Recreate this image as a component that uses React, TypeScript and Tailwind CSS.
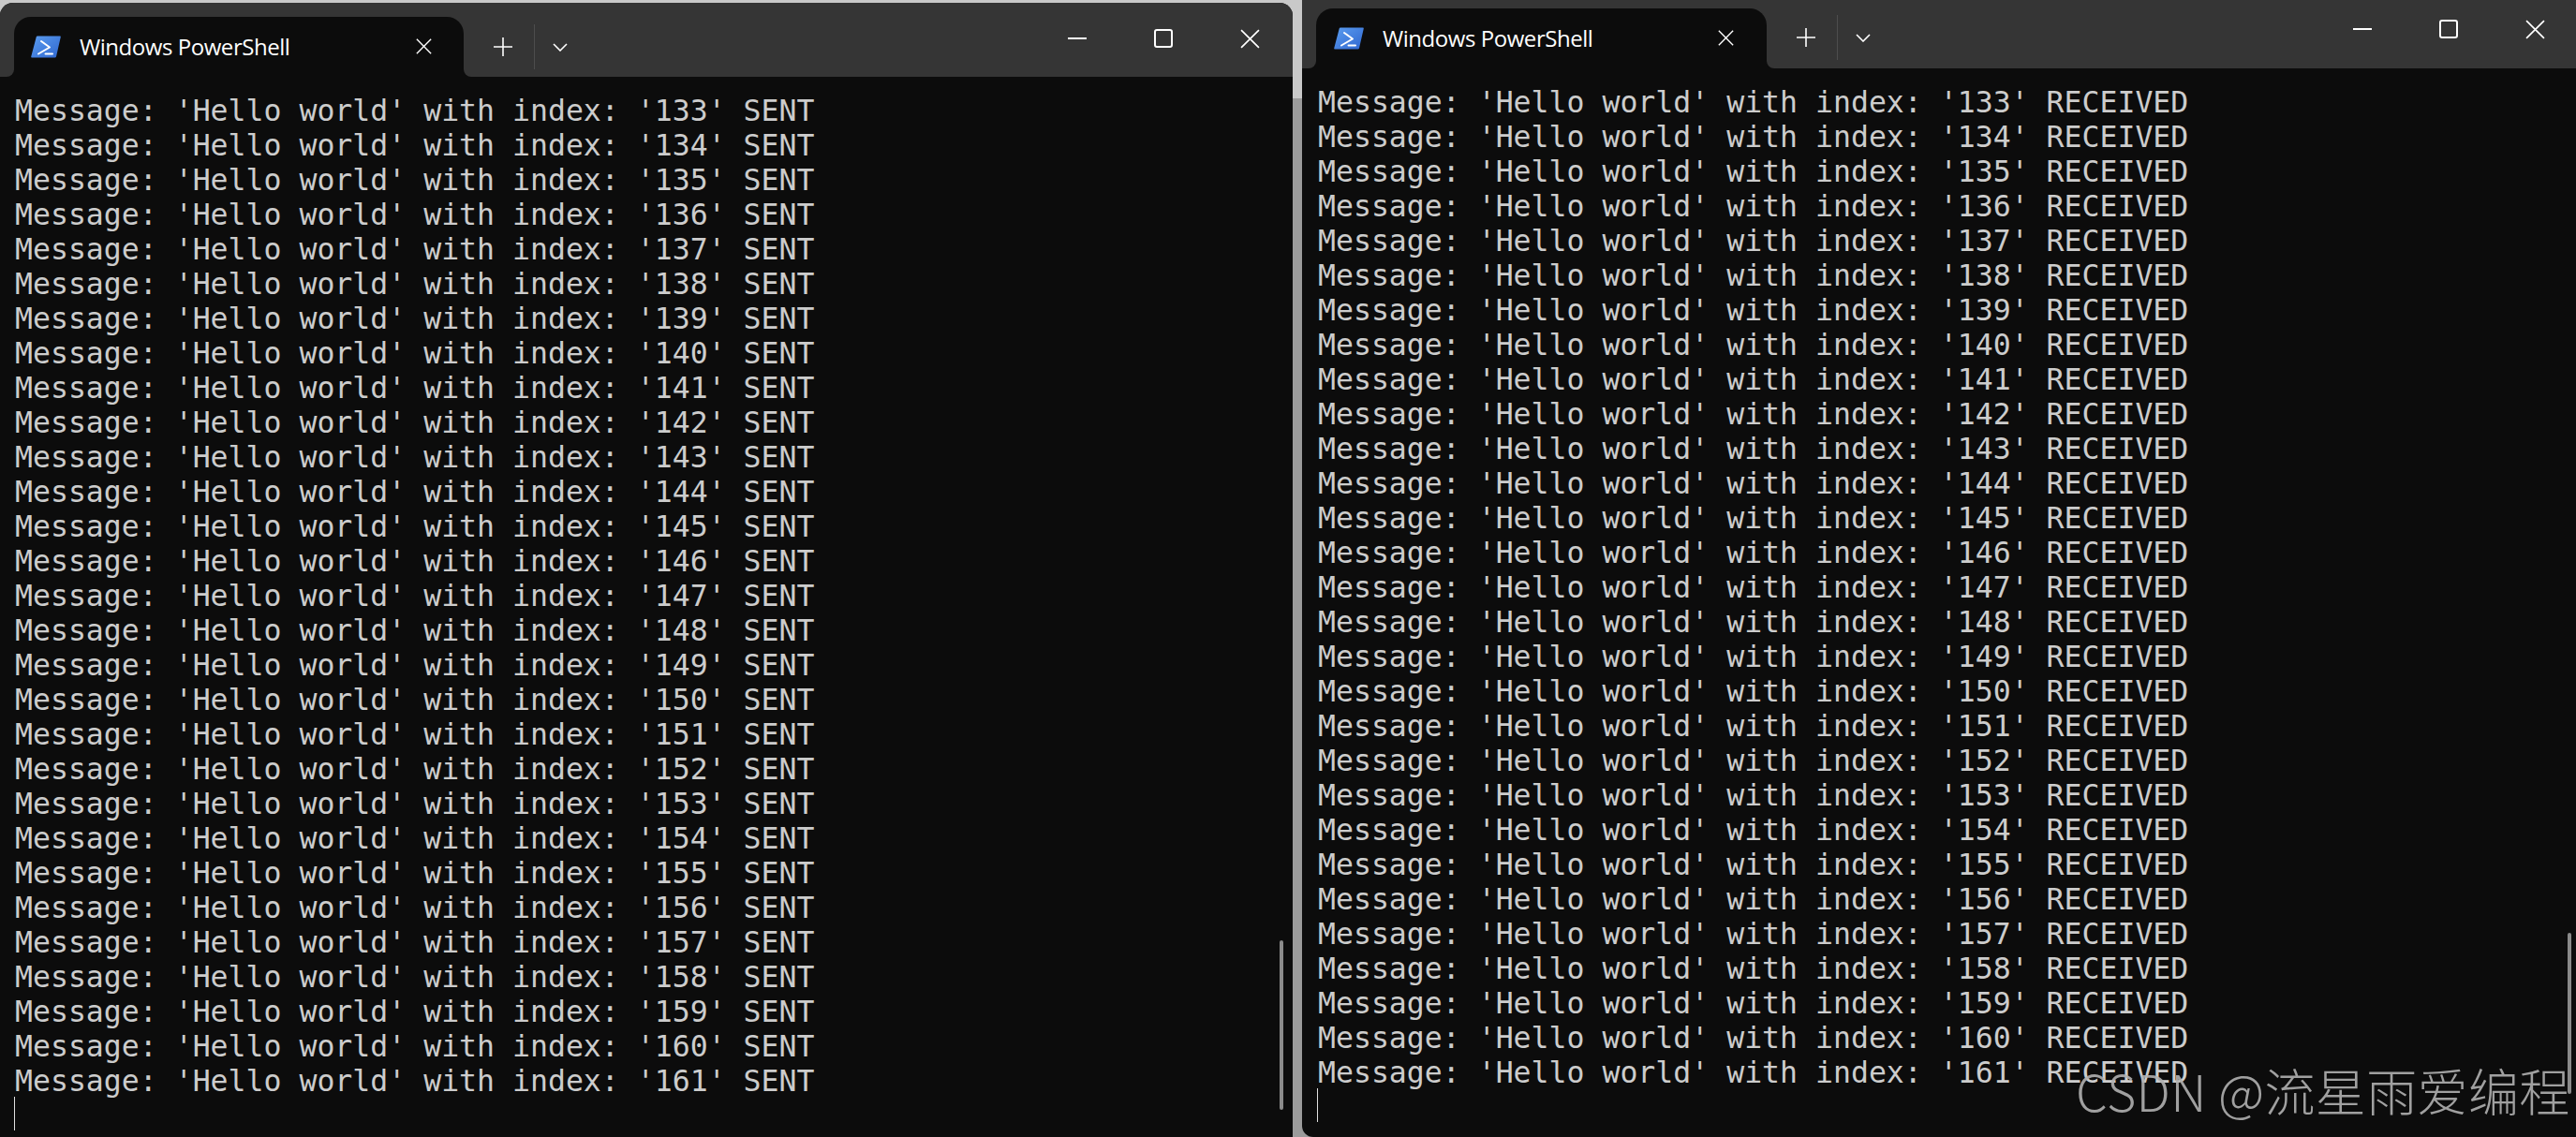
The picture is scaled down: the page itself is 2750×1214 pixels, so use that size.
import React from 'react';

const mono = 'font-["DejaVu_Sans_Mono","Liberation_Mono",monospace]';

const PsIcon = () => (
  <svg className="w-[32px] h-[24px] shrink-0" viewBox="0 0 32 24">
    <defs>
      <linearGradient id="ps" x1="0" y1="0" x2="1" y2="1">
        <stop offset="0" stopColor="#5b9df0" />
        <stop offset="1" stopColor="#2f66cf" />
      </linearGradient>
    </defs>
    <path d="M7 0.5H31q1 0 .8 1L27 22.5q-.3 1-1.3 1H1q-1 0-.8-1L5.8 1.3Q6 .5 7 .5z" fill="url(#ps)" />
    <path d="M11 6l9 6.5L8 19.5" fill="none" stroke="#fff" strokeWidth="2" strokeLinecap="round" strokeLinejoin="round" />
    <path d="M15.5 19.5h7.5" fill="none" stroke="#fff" strokeWidth="2" strokeLinecap="round" />
  </svg>
);

const XIcon = ({ size }: { size: number }) => (
  <svg width={size} height={size} viewBox="0 0 20 20" fill="none" stroke="#fff" strokeWidth="1.6">
    <path d="M1 1l18 18M19 1L1 19" />
  </svg>
);

const TitleBar = ({ offset }: { offset: boolean }) => (
  <div className={offset ? 'h-[73px] bg-[#353535] flex shrink-0 pl-[15px]' : 'h-[79px] bg-[#353535] flex shrink-0 pl-[15px]'}>
    <div className={offset ? 'relative mt-[9px] w-[481px] h-[64px] bg-[#0c0c0c] rounded-t-[18px] flex items-center pl-[19px]' : 'relative mt-[15px] w-[480px] h-[64px] bg-[#0c0c0c] rounded-t-[18px] flex items-center pl-[18px]'}>
      <PsIcon />
      <span className='ml-[20px] text-[24px] text-white font-["Open_Sans","Noto_Sans",sans-serif] tracking-[-0.45px] leading-none'>Windows PowerShell</span>
      <span className="absolute left-[429px] top-[23px]"><XIcon size={17} /></span>
      <span className="absolute -left-[8px] bottom-0 w-[8px] h-[8px] bg-[#0c0c0c]">
        <span className="block w-full h-full bg-[#353535] rounded-br-[8px]" />
      </span>
      <span className="absolute -right-[8px] bottom-0 w-[8px] h-[8px] bg-[#0c0c0c]">
        <span className="block w-full h-full bg-[#353535] rounded-bl-[8px]" />
      </span>
    </div>
    <div className={offset ? 'flex items-center h-[64px] pt-[16px]' : 'flex items-center h-[64px] mt-[15px]'}>
      <svg className="ml-[32px]" width="20" height="20" viewBox="0 0 20 20" fill="none" stroke="#fff" strokeWidth="1.6">
        <path d="M10 0v20M0 10h20" />
      </svg>
      <span className="ml-[23px] w-px h-[48px] bg-[#4d4d4d]" />
      <svg className="ml-[19px]" width="16" height="9" viewBox="0 0 16 9" fill="none" stroke="#fff" strokeWidth="1.6">
        <path d="M1 1l7 7 7-7" />
      </svg>
    </div>
    <div className={offset ? 'ml-auto flex h-[62px] items-center pr-[33px] gap-[72px]' : 'ml-auto flex h-[76px] items-center pr-[35px] gap-[72px]'}>
      <span className="w-[20px] h-[2px] bg-white" />
      <span className="w-[20px] h-[20px] border-2 border-white rounded-[3px]" />
      <XIcon size={21} />
    </div>
  </div>
);

const Terminal = ({ suffix, right }: { suffix: string; right: boolean }) => {
  const lines = [];
  for (let i = 133; i <= 161; i++) lines.push(i);
  return (
    <div className={right ? `flex-1 ${mono} text-[31.5px] leading-[37px] text-[#cccccc] pl-[17px] pt-[18px] whitespace-pre` : `flex-1 ${mono} text-[31.5px] leading-[37px] text-[#cccccc] pl-[16px] pt-[18px] whitespace-pre`}>
      {lines.map((n) => (
        <div key={n} className="h-[37px]">Message: 'Hello world' with index: '{n}' {suffix}</div>
      ))}
      <div className="w-px h-[36px] bg-[#e0e0e0] -ml-[1px] -mt-[2px]" />
    </div>
  );
};

export default function App() {
  return (
    <div className="relative w-[2750px] h-[1214px] overflow-hidden flex bg-[linear-gradient(#c9c9c9_105px,#9b9b9b_105px)]">
      <div className="relative w-[1380px] mt-[3px] flex flex-col bg-[#0c0c0c] rounded-t-[14px] overflow-hidden">
        <TitleBar offset={false} />
        <Terminal suffix="SENT" right={false} />
        <span className="absolute left-[1366px] top-[1001px] w-[4px] h-[181px] rounded-full bg-[#8a8a8a]" />
      </div>
      <div className="relative ml-[10px] flex-1 flex flex-col bg-[#0c0c0c] rounded-bl-[12px] overflow-hidden">
        <TitleBar offset />
        <Terminal suffix="RECEIVED" right />
        <span className="absolute left-[1351px] top-[996px] w-[4px] h-[172px] rounded-full bg-[#8a8a8a]" />
      </div>
      <div className='absolute left-[2216px] top-[1125px] text-[54px] leading-[78px] text-[#b0b0b0]/90 whitespace-pre tracking-[0.35px] font-["Noto_Sans_CJK_SC",sans-serif] font-light'>CSDN @流星雨爱编程</div>
    </div>
  );
}
